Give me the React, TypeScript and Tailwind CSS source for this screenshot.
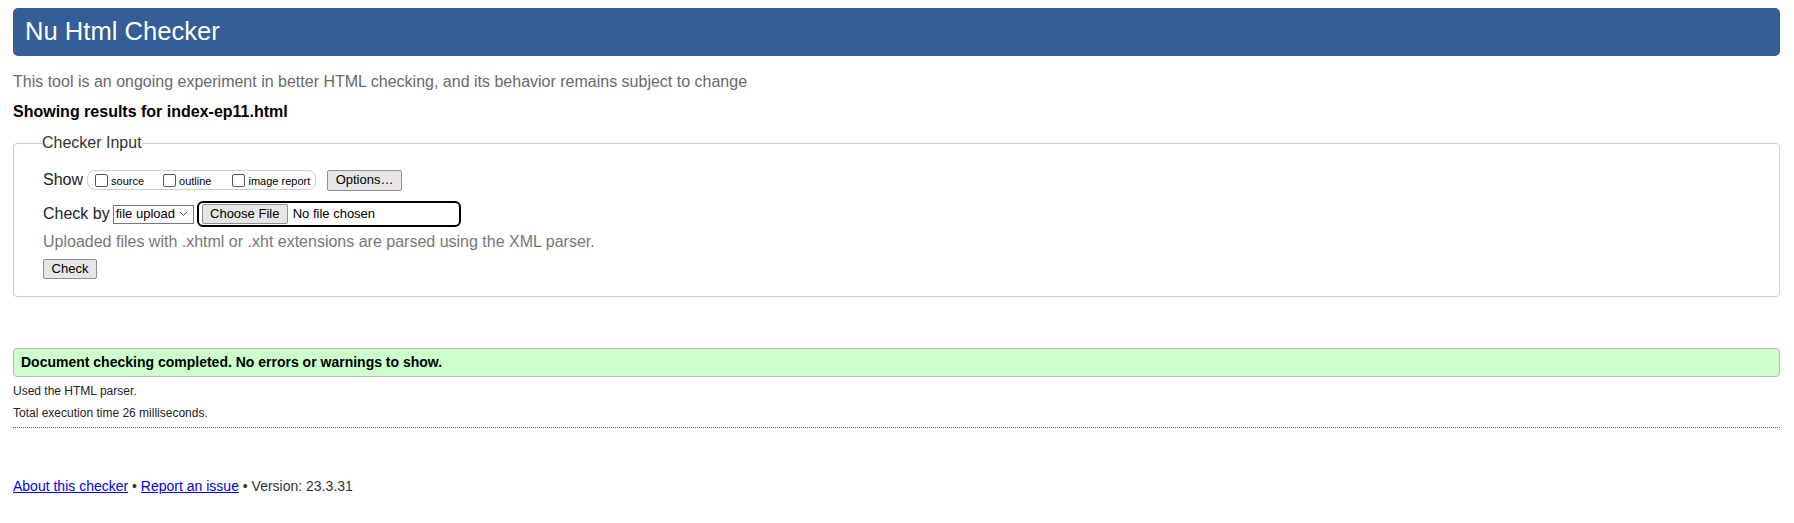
import React from "react";

const font = "font-['Liberation_Sans',Arial,sans-serif]";

function Box({ label }: { label: string }) {
  return (
    <span className="flex items-end">
      <span className="w-[13px] h-[13px] border border-[#555] rounded-[2px] bg-white mr-[3px]" />
      <span className="text-[11px] leading-none text-black">{label}</span>
    </span>
  );
}

function GrayButton({ children, className = "" }: { children: React.ReactNode; className?: string }) {
  return (
    <span
      className={
        "flex items-center justify-center h-[20px] bg-[#e6e6e6] border border-[#8f8f8f] rounded-[2px] text-[13px] text-black " +
        className
      }
    >
      {children}
    </span>
  );
}

export default function App() {
  return (
    <div className={`${font} bg-white min-h-[523px] pl-[13px] pr-[14px] pt-2 text-[#222]`}>
      {/* Header */}
      <div className="h-12 rounded-[5px] bg-[#365e96] flex items-center pl-3">
        <h1 className="text-white text-[25.6px] leading-none">Nu Html Checker</h1>
      </div>

      <p className="mt-[17px] text-[16px] leading-[18px] text-[#6a6a6a]">
        This tool is an ongoing experiment in better HTML checking, and its behavior remains subject to change
      </p>
      <p className="mt-[12px] text-[16px] leading-[18px] font-bold text-black">
        Showing results for index-ep11.html
      </p>

      {/* Checker input */}
      <fieldset className="mt-[13px] border border-[#cccccc] rounded-[4px] pl-[29px] pb-[17px]">
        <legend className="text-[16px] leading-[18px] text-[#333] -ml-[1px] px-0">Checker Input</legend>

        <div className="mt-[17px] h-[22px] flex items-center">
          <span className="text-[16px] text-[#222]">Show</span>
          <span className="ml-[4px] h-[20px] w-[229px] border border-[#cccccc] rounded-[8px] flex items-center pl-[7px]">
            <Box label="source" />
            <span className="w-[19px]" />
            <Box label="outline" />
            <span className="w-[21px]" />
            <Box label="image report" />
          </span>
          <GrayButton className="ml-[11px] w-[75px] h-[21px]">Options…</GrayButton>
        </div>

        <div className="mt-[10px] h-[26px] flex items-center">
          <span className="text-[16px] text-[#222]">Check by</span>
          <span className="ml-[3px] h-[19px] w-[81px] border border-[#767676] flex items-center pl-[2px] text-[13px] text-black">
            file upload
            <svg className="ml-[4px]" width="9" height="6" viewBox="0 0 9 6">
              <path d="M1 1l3.5 3.5L8 1" fill="none" stroke="#555" strokeWidth="1" />
            </svg>
          </span>
          <span className="ml-[3px] h-[26px] w-[264px] border-2 border-black rounded-[6px] flex items-center pl-[3px]">
            <GrayButton className="w-[86px]">Choose File</GrayButton>
            <span className="ml-[5px] text-[13px] text-black">No file chosen</span>
          </span>
        </div>

        <p className="mt-[6px] text-[16px] leading-[18px] text-[#777]">
          Uploaded files with .xhtml or .xht extensions are parsed using the XML parser.
        </p>

        <div className="mt-[8px] flex">
          <GrayButton className="w-[54px]">Check</GrayButton>
        </div>
      </fieldset>

      {/* Result */}
      <div className="mt-[51px] h-[29px] bg-[#ccffcc] border border-[#bbbbbb] rounded-[4px] flex items-center pl-[7px]">
        <span className="text-[14px] font-bold text-black">
          Document checking completed. No errors or warnings to show.
        </span>
      </div>

      <p className="mt-[7px] text-[12px] leading-[15px] text-[#222]">Used the HTML parser.</p>
      <p className="mt-[7px] text-[12px] leading-[15px] text-[#222]">Total execution time 26 milliseconds.</p>

      <div className="mt-[6px] border-b border-dotted border-[#666]" />

      <p className="mt-[50px] text-[14px] leading-[16px] text-[#333]">
        <a className="text-[#0000ee] underline">About this checker</a>
        {" • "}
        <a className="text-[#0000ee] underline">Report an issue</a>
        {" • Version: 23.3.31"}
      </p>
    </div>
  );
}
